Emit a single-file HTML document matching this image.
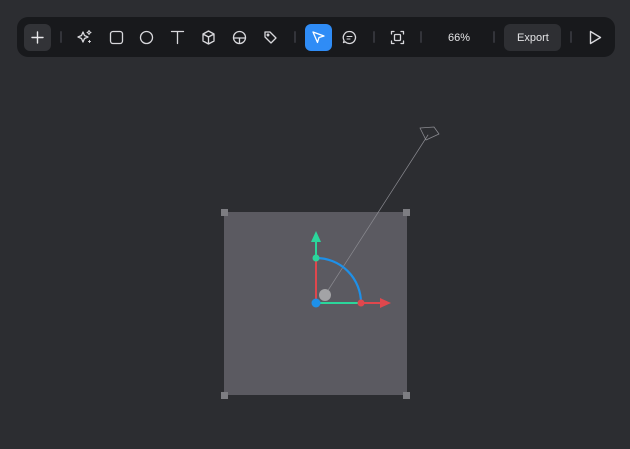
<!DOCTYPE html>
<html><head><meta charset="utf-8"><style>
html,body{margin:0;padding:0;width:630px;height:449px;background:#2c2d31;overflow:hidden;font-family:"Liberation Sans",sans-serif}
.bar{position:absolute;left:17px;top:17px;width:598px;height:40px;background:#18191c;border-radius:11px}
svg{position:absolute;left:0;top:0}
.t{position:absolute;color:#e4e4e6;font-size:11px}
</style></head><body>
<div class="bar"></div>
<div style="position:absolute;left:24px;top:24px;width:27px;height:27px;background:#323337;border-radius:6px"></div>
<div style="position:absolute;left:305px;top:24px;width:27px;height:27px;background:#2f8cf6;border-radius:6px"></div>
<div style="position:absolute;left:504px;top:24px;width:57px;height:27px;background:#2e2f33;border-radius:6px"></div>
<div class="t" style="left:448px;top:32px">66%</div>
<div class="t" style="left:517px;top:32px">Export</div>
<svg width="630" height="449" viewBox="0 0 630 449" fill="none" stroke="#d8d8dc" stroke-width="1.3" stroke-linecap="round" stroke-linejoin="round">
<path d="M37.5 32v11M32 37.5h11" stroke="#e8e8ea" stroke-width="1.4"/>
<g stroke="#33343a" stroke-width="2"><path d="M61 32v10M295 32v10M374 32v10M421 32v10M494 32v10M571 32v10"/></g>
<path d="M83 32l1.5 3.5 3.5 1.5-3.5 1.5-1.5 3.5-1.5-3.5-3.5-1.5 3.5-1.5z"/>
<path d="M89 30.5l.7 1.3 1.3.7-1.3.7-.7 1.3-.7-1.3-1.3-.7 1.3-.7z" stroke-width="1"/>
<path d="M89.5 40.5v2M88.5 41.5h2" stroke-width="1"/>
<rect x="110.5" y="31.5" width="12" height="12" rx="2.5"/>
<circle cx="146.5" cy="37.5" r="6"/>
<path d="M171.5 31.5h12M177.5 31.5v12"/>
<path d="M208.5 31l5.5 3v7l-5.5 3-5.5-3v-7z M203 34l5.5 3 5.5-3 M208.5 37v7"/>
<circle cx="239.5" cy="37.5" r="6"/><path d="M233.5 38h12M239.5 38v5.5"/>
<path d="M265 32h5l6 6-5 5-6-6z"/><circle cx="268" cy="35" r=".8"/>
<path d="M313 32l11 4-5 1.5-1.5 5z" stroke="#fff"/>
<path d="M349.5 31.5a6 6 0 1 1-4.2 10.3l-1.8.7.6-2a6 6 0 0 1 5.4-9z"/><path d="M347 36.5h5M347 39h3" stroke-width="1"/>
<path d="M391.5 34v-2.5h2.5M401 31.5h2.5v2.5M403.5 41v2.5H401M394 43.5h-2.5V41"/><rect x="394.5" y="34.5" width="6" height="6" rx="1"/>
<path d="M590.5 31.5l10 6-10 6z" stroke-width="1.4"/>

<rect x="224" y="212" width="183" height="183" fill="#5b5a61" stroke="none"/>
<g fill="#7d7d82" stroke="none">
<rect x="221" y="209" width="7" height="7"/><rect x="403" y="209" width="7" height="7"/>
<rect x="221" y="392" width="7" height="7"/><rect x="403" y="392" width="7" height="7"/>
</g>
<path d="M325 295L428 135" stroke="#8a8a90" stroke-width="0.7"/>
<path d="M420 128l14-1 5 7-13 6z" stroke="#8a8a90" stroke-width="0.8"/>
<path d="M316 258a45 45 0 0 1 45 45" stroke="#1e90e8" stroke-width="2.2"/>
<path d="M316 303V258" stroke="#e0474d" stroke-width="2"/>
<path d="M316 258V238" stroke="#2bd69b" stroke-width="2"/>
<path d="M311 242l5-11 5 11z" fill="#2bd69b" stroke="none"/>
<path d="M316 303H361" stroke="#2bd69b" stroke-width="2"/>
<path d="M361 303H382" stroke="#e0474d" stroke-width="2"/>
<path d="M380 298l11 5-11 5z" fill="#e0474d" stroke="none"/>
<circle cx="316" cy="258" r="3.5" fill="#2bd69b" stroke="none"/>
<circle cx="361" cy="303" r="3.5" fill="#e0474d" stroke="none"/>
<circle cx="325" cy="295" r="6" fill="#a3a3a6" stroke="none"/>
<circle cx="316" cy="303" r="4.5" fill="#1e90e8" stroke="none"/>
</svg>
</body></html>
